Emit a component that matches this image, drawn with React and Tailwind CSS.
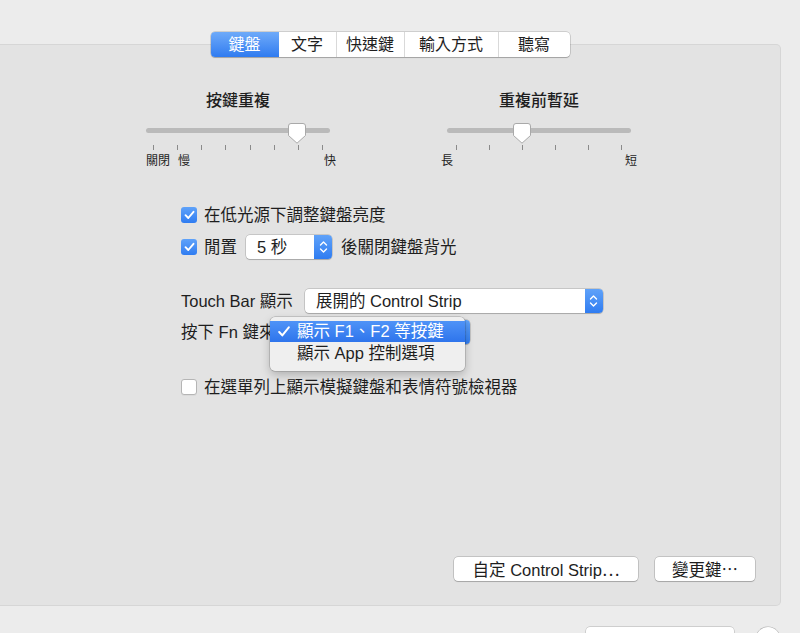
import React from "react";

const font = { fontFamily: '"Liberation Sans", "Noto Sans CJK TC", sans-serif' };

function Thumb() {
  return (
    <svg width="18" height="21" viewBox="0 0 18 21">
      <path
        d="M3 0.5 H15 Q17.5 0.5 17.5 3 V12.5 L9 20.2 L0.5 12.5 V3 Q0.5 0.5 3 0.5 Z"
        fill="#ffffff"
        stroke="#a9a9a9"
        strokeWidth="1"
      />
    </svg>
  );
}

function Slider({ title, ticks, thumbLeft, tickPad, labels, labelPad }) {
  return (
    <div className="w-[184px] flex flex-col">
      <div className="h-[20px] leading-[20px] text-center text-[16px] font-medium text-[#1e1e1e]">
        {title}
      </div>
      <div className="relative h-[20px] mt-[9px] flex items-center">
        <div className="w-full h-[5px] rounded-full bg-[#bababa]" />
        <div className="absolute top-[3px]" style={{ left: thumbLeft }}>
          <Thumb />
        </div>
      </div>
      <div className={`flex justify-between mt-[5px] ${tickPad}`}>
        {Array.from({ length: ticks }).map((_, i) => (
          <div key={i} className="w-px h-[5px] bg-[#8a8a8a]" />
        ))}
      </div>
      <div className={`flex mt-[4px] text-[12px] leading-[14px] text-[#1e1e1e] ${labelPad}`}>
        {labels}
      </div>
    </div>
  );
}

function Checkbox({ checked }) {
  if (!checked) {
    return (
      <div className="w-[16px] h-[16px] rounded-[3px] bg-white border border-[#b5b5b5] shadow-[0_1px_0_rgba(0,0,0,0.04)]" />
    );
  }
  return (
    <div className="w-[16px] h-[16px] rounded-[3px] bg-gradient-to-b from-[#5fa2f9] to-[#2f7cf1] flex items-center justify-center">
      <svg width="11" height="10" viewBox="0 0 11 10">
        <path d="M1.5 5.2 L4.3 8 L9.5 1.8" fill="none" stroke="#fff" strokeWidth="1.9" strokeLinecap="round" strokeLinejoin="round" />
      </svg>
    </div>
  );
}

function Chevrons() {
  return (
    <svg width="9" height="14" viewBox="0 0 9 14">
      <path d="M1.5 5 L4.5 2 L7.5 5" fill="none" stroke="#fff" strokeWidth="1.4" strokeLinecap="round" strokeLinejoin="round" />
      <path d="M1.5 9 L4.5 12 L7.5 9" fill="none" stroke="#fff" strokeWidth="1.4" strokeLinecap="round" strokeLinejoin="round" />
    </svg>
  );
}

function Popup({ text, width }) {
  return (
    <div
      className={`h-[24px] flex rounded-[4px] bg-white shadow-[0_0_0_0.5px_rgba(0,0,0,0.25),0_1px_1px_rgba(0,0,0,0.15)] ${width}`}
    >
      <div className="flex-1 pl-[11px] leading-[24px] text-[#1e1e1e] whitespace-nowrap overflow-hidden">
        {text}
      </div>
      <div className="w-[18px] rounded-r-[4px] bg-gradient-to-b from-[#5fa2f9] to-[#2f7cf1] flex items-center justify-center">
        <Chevrons />
      </div>
    </div>
  );
}

function PushButton({ children, width }) {
  return (
    <div
      className={`h-[24px] rounded-[4px] bg-white shadow-[0_0_0_0.5px_rgba(0,0,0,0.28),0_1px_1px_rgba(0,0,0,0.15)] text-[16.5px] leading-[24px] text-center text-[#1e1e1e] ${width}`}
    >
      {children}
      <span style={{ fontFamily: '"Noto Sans CJK TC", sans-serif' }}>⋯</span>
    </div>
  );
}

const tabs = [
  { label: "鍵盤", w: "w-[68px]" },
  { label: "文字", w: "w-[57px]" },
  { label: "快速鍵", w: "w-[68px]" },
  { label: "輸入方式", w: "w-[94px]" },
  { label: "聽寫", w: "w-[72px]" },
];

export default function App() {
  return (
    <div className="w-[800px] h-[633px] overflow-hidden bg-[#ececec] pt-[44px]" style={font}>
      <div className="w-[781px] h-[562px] bg-[#e3e3e3] border border-l-0 border-[#d6d6d6] rounded-r-[5px] flex flex-col">
        {/* tabs */}
        <div className="flex justify-center -mt-[13px]">
          <div className="flex h-[25px] rounded-[4px] bg-white shadow-[0_0_0_0.5px_rgba(0,0,0,0.25),0_1px_1px_rgba(0,0,0,0.18)] overflow-hidden">
            {tabs.map((t, i) => (
              <div
                key={t.label}
                className={`${t.w} text-[16px] leading-[25px] text-center ${
                  i === 0
                    ? "bg-gradient-to-b from-[#6eaaf9] to-[#2f7bf0] text-white"
                    : "text-[#1e1e1e] border-l border-[#d9d9d9]"
                } ${i === 1 ? "border-l-0" : ""}`}
              >
                {t.label}
              </div>
            ))}
          </div>
        </div>

        {/* sliders */}
        <div className="flex pl-[146px] mt-[34px]">
          <Slider
            title="按鍵重複"
            ticks={8}
            thumbLeft={142}
            tickPad="px-[7px]"
            labelPad="-mr-[6px]"
            labels={
              <>
                <span>關閉</span>
                <span className="ml-[8px]">慢</span>
                <span className="ml-auto">快</span>
              </>
            }
          />
          <div className="ml-[117px]">
            <Slider
              title="重複前暫延"
              ticks={6}
              thumbLeft={66}
              tickPad="px-[9px]"
              labelPad="-mx-[6px]"
              labels={
                <>
                  <span>長</span>
                  <span className="ml-auto">短</span>
                </>
              }
            />
          </div>
        </div>

        {/* options */}
        <div className="pl-[181px] flex flex-col text-[16.5px] text-[#1e1e1e]">
          <div className="h-[24px] mt-[35px] flex items-center gap-[7px]">
            <Checkbox checked />
            <span>在低光源下調整鍵盤亮度</span>
          </div>
          <div className="h-[24px] mt-[8px] flex items-center">
            <Checkbox checked />
            <span className="ml-[7px]">閒置</span>
            <div className="ml-[9px]">
              <Popup text="5 秒" width="w-[86px]" />
            </div>
            <span className="ml-[9px]">後關閉鍵盤背光</span>
          </div>

          <div className="h-[24px] mt-[30px] flex items-center">
            <span>Touch Bar 顯示</span>
            <div className="ml-[12px]">
              <Popup text="展開的 Control Strip" width="w-[298px]" />
            </div>
          </div>
          <div className="relative h-[24px] mt-[7px] flex items-center">
            <span>按下 Fn 鍵來</span>
            <div className="ml-[12px]">
              <Popup text="顯示 F1、F2 等按鍵" width="w-[183px]" />
            </div>
            {/* open menu */}
            <div className="absolute left-[89px] -top-[3px] w-[195px] pt-[4px] pb-[6px] rounded-[5px] bg-[#efefef] shadow-[0_0_0_0.5px_rgba(0,0,0,0.25),0_4px_10px_rgba(0,0,0,0.22)]">
              <div className="h-[21px] flex items-center bg-gradient-to-b from-[#4f93f7] to-[#2e74ec] text-white">
                <span className="w-[27px] pl-[8px] flex items-center">
                  <svg width="12" height="11" viewBox="0 0 12 11">
                    <path d="M1.2 6 L4.3 9.4 L10.8 1.4" fill="none" stroke="#fff" strokeWidth="2" strokeLinecap="round" strokeLinejoin="round" />
                  </svg>
                </span>
                <span className="leading-[21px]">顯示 F1、F2 等按鍵</span>
              </div>
              <div className="h-[23px] flex items-center">
                <span className="w-[27px]" />
                <span className="leading-[23px]">顯示 App 控制選項</span>
              </div>
            </div>
          </div>

          <div className="h-[24px] mt-[31px] flex items-center gap-[7px]">
            <Checkbox />
            <span>在選單列上顯示模擬鍵盤和表情符號檢視器</span>
          </div>
        </div>

        {/* bottom buttons */}
        <div className="mt-auto mb-[24px] pr-[25px] flex justify-end gap-[17px]">
          <PushButton width="w-[184px]">自定 Control Strip</PushButton>
          <PushButton width="w-[100px]">變更鍵</PushButton>
        </div>
      </div>

      {/* window footer, cut off */}
      <div className="flex justify-end items-start pr-[20px] mt-[21px]">
        <div className="w-[148px] h-[24px] rounded-[4px] bg-white shadow-[0_0_0_0.5px_rgba(0,0,0,0.25)]" />
        <div className="ml-[22px] w-[24px] h-[24px] rounded-full bg-white shadow-[0_0_0_0.5px_rgba(0,0,0,0.25)]" />
      </div>
    </div>
  );
}
